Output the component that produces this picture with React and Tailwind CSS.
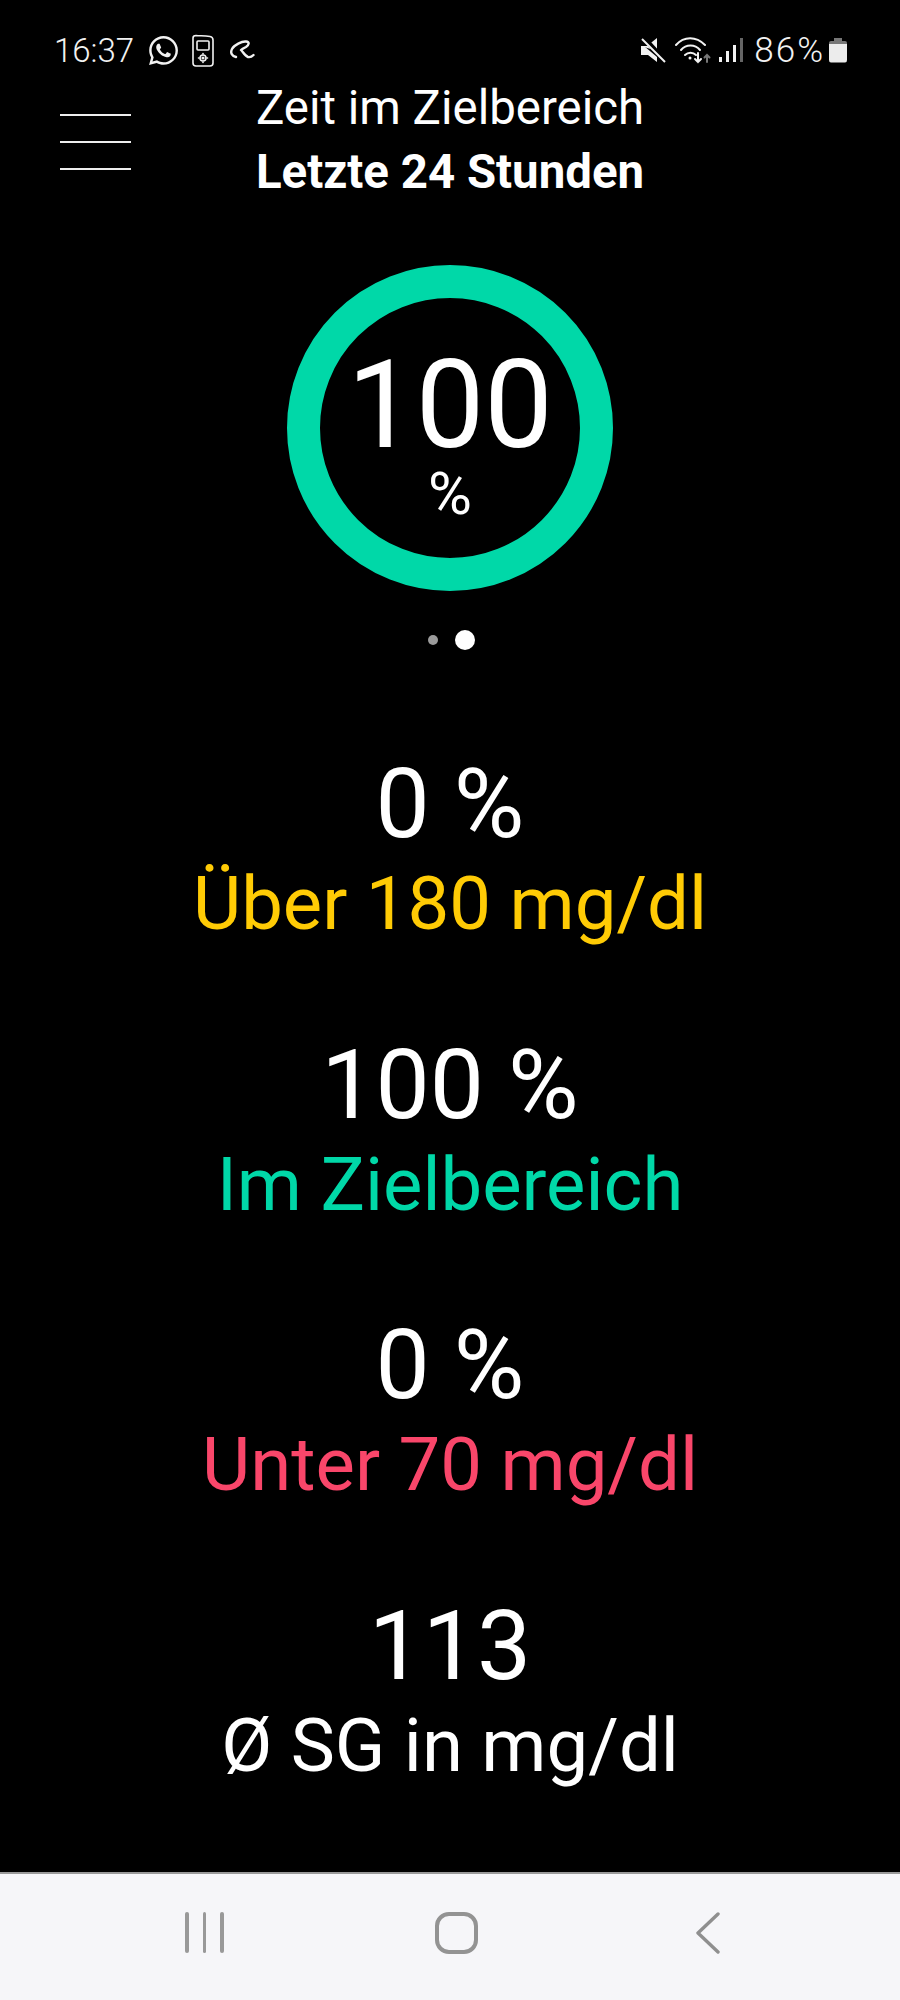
import { FaWhatsapp } from "react-icons/fa"

const stats = [
  { value: "0 %", label: "Über 180 mg/dl", color: "text-[#ffcb05]" },
  { value: "100 %", label: "Im Zielbereich", color: "text-[#00d8a8]" },
  { value: "0 %", label: "Unter 70 mg/dl", color: "text-[#f9466a]" },
  { value: "113", label: "Ø SG in mg/dl", color: "text-white" },
]

const PumpIcon = () => (
  <svg width="22" height="33" viewBox="0 0 22 33" fill="none" stroke="#f2f2f2" strokeWidth="1.6">
    <path d="M4 1.5 C8 2 12 1.5 18 2.5 Q21 3 21 6 V29 Q21 32 18 32 H4 Q1 32 1 29 V4 Q1 1.5 4 1.5 Z" />
    <rect x="5" y="7" width="12" height="9" rx="1" />
    <circle cx="11" cy="24" r="3" />
    <circle cx="11" cy="24" r="0.8" fill="#f2f2f2" />
    <path d="M11 19.5v.5M11 28v.5M6.5 24h.5M15 24h.5" strokeLinecap="round" />
  </svg>
)

const ScribbleIcon = () => (
  <svg width="25" height="20" viewBox="0 0 25 20" fill="none" stroke="#f2f2f2" strokeWidth="2.4" strokeLinecap="round" strokeLinejoin="round">
    <path d="M6 17 C2 16 0 13 2 9 C4 5 12 1 16 1.5 C20 2 19 5 16 7 C14 8 12 9 11 10 C13 12 15 16 18 17 C20 17.5 22 16.5 23.5 15" />
  </svg>
)

const MuteIcon = () => (
  <svg width="26" height="26" viewBox="0 0 26 26" fill="none">
    <path d="M1 9 H7 L17 1 V14 Z" fill="#f2f2f2" />
    <path d="M1 9 H4 L17 20 V25 L8 18 H1 Z" fill="#f2f2f2" />
    <path d="M3 0 L24 23" stroke="#000" strokeWidth="5" />
    <path d="M2 2 L25 25" stroke="#f2f2f2" strokeWidth="2" />
  </svg>
)

const WifiIcon = () => (
  <svg width="37" height="27" viewBox="0 0 37 27" fill="none" stroke="#f2f2f2" strokeWidth="2" strokeLinecap="round">
    <path d="M1 8 C9 -1 21 -1 30 8" />
    <path d="M6 13 C11 7 20 7 25 13" />
    <path d="M10 18 C13 15 18 15 21 18" />
    <circle cx="15" cy="21" r="1.5" fill="#f2f2f2" stroke="none" />
    <path d="M23 16 V25 M20 22 L23 25 L26 22" />
    <path d="M32 25 V18 M29.5 20.5 L32 18 L34.5 20.5" stroke="#777" />
  </svg>
)

const SignalIcon = () => (
  <div className="flex items-end gap-[4px] h-[24px]">
    <span className="w-[3px] h-[5px] bg-[#f2f2f2]" />
    <span className="w-[3px] h-[11px] bg-[#f2f2f2]" />
    <span className="w-[3px] h-[17px] bg-[#f2f2f2]" />
    <span className="w-[3px] h-[24px] bg-[#666]" />
  </div>
)

const BatteryIcon = () => (
  <svg width="18" height="25" viewBox="0 0 18 25">
    <path d="M5 0 H13 V3 H5 Z" fill="#777" />
    <path d="M2 3 H16 Q18 3 18 5 V6 H0 V5 Q0 3 2 3 Z" fill="#777" />
    <path d="M0 6 H18 V22 Q18 24.5 16 24.5 H2 Q0 24.5 0 22 Z" fill="#ececec" />
  </svg>
)

const StatusBar = () => (
  <div className="flex items-center justify-between h-[30px] mt-[35px] pl-[54px] pr-[53px] text-[#f2f2f2]">
    <div className="flex items-center">
      <span className="text-[33px] leading-none font-light">16:37</span>
      <FaWhatsapp className="ml-[13px] text-[33px]" />
      <span className="ml-[12px] flex"><PumpIcon /></span>
      <span className="ml-[16px] flex"><ScribbleIcon /></span>
    </div>
    <div className="flex items-center">
      <MuteIcon />
      <span className="ml-[9px] flex"><WifiIcon /></span>
      <span className="ml-[7px] flex"><SignalIcon /></span>
      <span className="ml-[11px] text-[35px] leading-none font-light tracking-[2px]">86%</span>
      <span className="ml-[4px] flex"><BatteryIcon /></span>
    </div>
  </div>
)

const Header = () => (
  <div className="grid grid-cols-[1fr_auto_1fr] mt-[11px] items-start">
    <div className="flex flex-col gap-[25px] w-[71px] ml-[60px] mt-[38px]">
      <span className="h-[2px] bg-[#eee]" />
      <span className="h-[2px] bg-[#eee]" />
      <span className="h-[2px] bg-[#eee]" />
    </div>
    <div className="text-center text-white text-[47.4px] leading-[64px]">
      <div>Zeit im Zielbereich</div>
      <div className="font-bold">Letzte 24 Stunden</div>
    </div>
    <div />
  </div>
)

const App = () => {
  return (
    <div className="w-[900px] h-[2000px] bg-black flex flex-col font-['Roboto',sans-serif]">
      <StatusBar />
      <Header />

      {/* Ring */}
      <div className="flex justify-center mt-[61px]">
        <div className="w-[326px] h-[326px] rounded-full border-[33px] border-[#00d8a8] flex flex-col items-center text-white">
          <span className="text-[122px] leading-none mt-[47px]">100</span>
          <span className="text-[60px] leading-none mt-[-3px]">%</span>
        </div>
      </div>

      {/* Pager */}
      <div className="flex justify-center items-center gap-[17px] mt-[39px] h-[20px] ml-[2px]">
        <span className="w-[10px] h-[10px] rounded-full bg-[#9b9b9b]" />
        <span className="w-[20px] h-[20px] rounded-full bg-white" />
      </div>

      {/* Stats */}
      <div className="flex flex-col gap-[80.5px] mt-[104px] flex-1">
        {stats.map((s, i) => (
          <div key={i} className="flex flex-col items-center">
            <span className="text-[96.5px] leading-[100px] text-white">{s.value}</span>
            <span className={`text-[74.3px] leading-[100px] ${s.color}`}>{s.label}</span>
          </div>
        ))}
      </div>

      {/* Nav bar */}
      <div className="h-[128px] bg-[#f6f6f9] border-t-2 border-[#9a9a9a] flex items-start pt-[38px] pl-[185px]">
        <div className="flex gap-[14px]">
          <span className="w-[3.5px] h-[41px] rounded-full bg-[#999]" />
          <span className="w-[3.5px] h-[41px] rounded-full bg-[#999]" />
          <span className="w-[3.5px] h-[41px] rounded-full bg-[#999]" />
        </div>
        <div className="w-[43px] h-[42px] ml-[211px] rounded-[14px] border-[4px] border-[#939393]" />
        <svg className="ml-[218px]" width="24" height="42" viewBox="0 0 24 42" fill="none" stroke="#8f8f8f" strokeWidth="3.4" strokeLinecap="round" strokeLinejoin="round">
          <path d="M22 2 L2 21 L22 40" />
        </svg>
      </div>
    </div>
  )
}

export default App
